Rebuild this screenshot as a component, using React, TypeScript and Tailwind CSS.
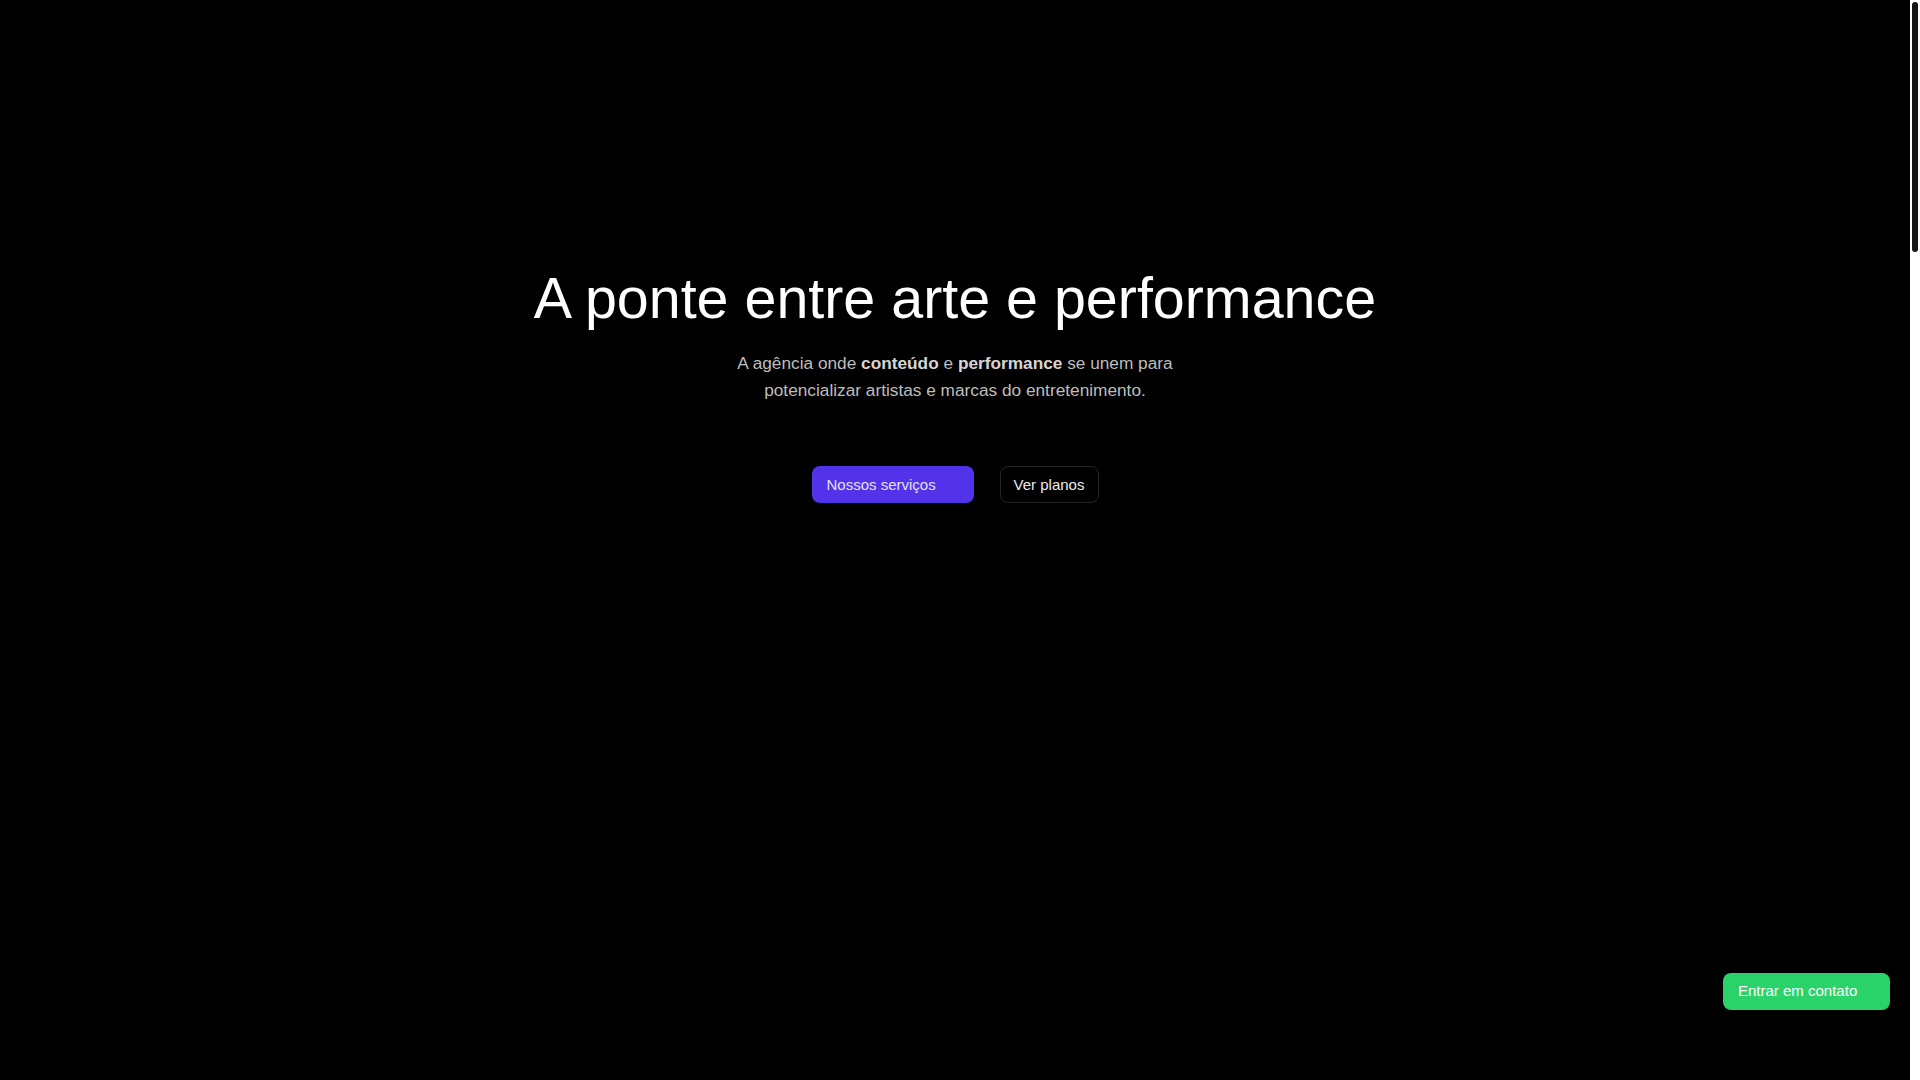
import React from "react";

export default function App() {
  return (
    <div
      className="flex h-screen w-full overflow-hidden bg-black text-white"
      style={{ fontFamily: '"Liberation Sans", Arial, sans-serif' }}
    >
      <main className="flex-1 overflow-hidden">
        <section className="flex h-[1080px] flex-col items-center pt-[270px]">
          <h1 className="text-[57.4px] font-normal leading-none text-white">
            A ponte entre arte e performance
          </h1>
          <p className="mt-[23px] max-w-[452px] text-center text-[17.25px] leading-[27px] text-[#bdbdbd]">
            A agência onde <strong className="font-bold text-[#d6d6d6]">conteúdo</strong> e{" "}
            <strong className="font-bold text-[#d6d6d6]">performance</strong> se unem para potencializar
            artistas e marcas do entretenimento.
          </p>
          <div className="mt-[62px] flex items-center gap-[26px]">
            <button className="flex h-[37px] w-[162px] items-center rounded-lg bg-[#5333ea] pl-[15px] text-[15px] text-[#e4e0fd]">
              Nossos serviços
            </button>
            <button className="flex h-[37px] w-[99px] items-center justify-center rounded-lg border border-[#262626] bg-black text-[15px] text-[#ececec]">
              Ver planos
            </button>
          </div>
        </section>
      </main>
      <div className="flex h-full w-[10px] shrink-0 flex-col bg-white px-[2px] pt-[2px]">
        <div className="h-[250px] w-full rounded-full bg-[#161616]" />
      </div>
      <button className="fixed bottom-[70px] right-[30px] flex h-[37px] w-[167px] items-center rounded-lg bg-[#29d36a] pl-[15px] text-[15px] text-white">
        Entrar em contato
      </button>
    </div>
  );
}
